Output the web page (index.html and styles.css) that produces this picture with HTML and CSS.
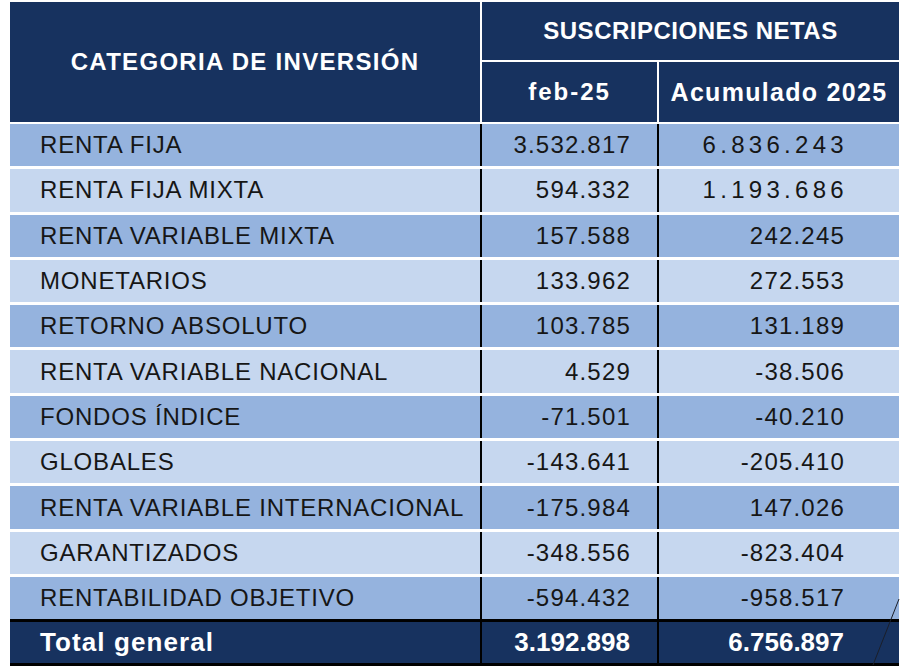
FILE: index.html
```html
<!DOCTYPE html>
<html lang="es">
<head>
<meta charset="utf-8">
<title>Suscripciones netas</title>
<link rel="stylesheet" href="styles.css">
</head>
<body>
<div class="wrap">
<table class="tbl">
  <colgroup>
    <col class="c1">
    <col class="c2">
    <col class="c3">
  </colgroup>
  <thead>
    <tr class="h1">
      <th rowspan="2" class="cat">CATEGORIA DE INVERSIÓN</th>
      <th colspan="2" class="sus">SUSCRIPCIONES NETAS</th>
    </tr>
    <tr class="h2">
      <th class="sub sub-a">feb-25</th>
      <th class="sub sub-b">Acumulado 2025</th>
    </tr>
  </thead>
  <tbody>
    <tr class="dark"><td class="name">RENTA FIJA</td><td class="n1">3.532.817</td><td class="n2 wide">6.836.243</td></tr>
    <tr class="light"><td class="name">RENTA FIJA MIXTA</td><td class="n1">594.332</td><td class="n2 wide">1.193.686</td></tr>
    <tr class="dark"><td class="name">RENTA VARIABLE MIXTA</td><td class="n1">157.588</td><td class="n2">242.245</td></tr>
    <tr class="light"><td class="name">MONETARIOS</td><td class="n1">133.962</td><td class="n2">272.553</td></tr>
    <tr class="dark"><td class="name">RETORNO ABSOLUTO</td><td class="n1">103.785</td><td class="n2">131.189</td></tr>
    <tr class="light"><td class="name">RENTA VARIABLE NACIONAL</td><td class="n1">4.529</td><td class="n2">-38.506</td></tr>
    <tr class="dark"><td class="name">FONDOS ÍNDICE</td><td class="n1">-71.501</td><td class="n2">-40.210</td></tr>
    <tr class="light"><td class="name">GLOBALES</td><td class="n1">-143.641</td><td class="n2">-205.410</td></tr>
    <tr class="dark"><td class="name">RENTA VARIABLE INTERNACIONAL</td><td class="n1">-175.984</td><td class="n2">147.026</td></tr>
    <tr class="light"><td class="name">GARANTIZADOS</td><td class="n1">-348.556</td><td class="n2">-823.404</td></tr>
    <tr class="dark"><td class="name">RENTABILIDAD OBJETIVO</td><td class="n1">-594.432</td><td class="n2">-958.517</td></tr>
  </tbody>
  <tfoot>
    <tr class="total"><td class="name">Total general</td><td class="n1">3.192.898</td><td class="n2">6.756.897</td></tr>
  </tfoot>
</table>
<svg class="slash" width="30" height="70" viewBox="0 0 30 70"><line x1="27" y1="0" x2="1" y2="66" stroke="#1b1f2a" stroke-width="1"/></svg>
</div>
</body>
</html>
```
FILE: styles.css
```css
html, body {
  margin: 0;
  padding: 0;
  background: #ffffff;
}
body {
  font-family: "Liberation Sans", Arial, sans-serif;
}
.wrap {
  position: relative;
  width: 906px;
  height: 672px;
}
.tbl {
  margin: 2px 0 0 10px;
  width: 889px;
  border-collapse: collapse;
  table-layout: fixed;
}
.c1 { width: 471px; }
.c2 { width: 177px; }
.c3 { width: 241px; }

th {
  background: #17325f;
  color: #ffffff;
  font-weight: bold;
  padding: 0;
  text-align: center;
  vertical-align: middle;
}
.cat {
  height: 120px;
  font-size: 24px;
  letter-spacing: 1.3px;
  border-right: 2px solid #ffffff;
  border-bottom: 2px solid #ffffff;
}
.h1 th.sus {
  height: 58px;
  font-size: 24px;
  letter-spacing: 0.5px;
  border-bottom: 2px solid #ffffff;
}
.h2 th {
  height: 60px;
  border-bottom: 2px solid #ffffff;
}
.sub-a {
  font-size: 24px;
  letter-spacing: 2px;
  border-right: 2px solid #ffffff;
}
.sub-b {
  font-size: 25px;
  letter-spacing: 1.3px;
}

td {
  padding: 0;
  height: 42.3px;
  font-size: 24px;
  color: #161616;
  vertical-align: middle;
  border-bottom: 3px solid #ffffff;
}
td.name {
  padding-left: 30px;
  text-align: left;
  letter-spacing: 0.8px;
}
td.n1 {
  text-align: right;
  padding-right: 26px;
  letter-spacing: 1.2px;
  border-left: 2px solid #000000;
}
td.n2 {
  text-align: right;
  padding-right: 54px;
  letter-spacing: 1.2px;
  border-left: 2px solid #000000;
}
td.n2.wide {
  letter-spacing: 4.3px;
  padding-right: 51px;
}
tr.dark td { background: #95b3de; }
tr.light td { background: #c6d7ef; }

tbody tr:last-child td {
  border-bottom: none;
  height: 42px;
}
tr.total td {
  background: #17325f;
  color: #ffffff;
  font-weight: bold;
  font-size: 26px;
  letter-spacing: 0;
  height: 41px;
  border-top: 3px solid #000000;
  border-bottom: 3px solid #000000;
}
tr.total td.name {
  letter-spacing: 1.1px;
}
tr.total td.n1 {
  padding-right: 27px;
}
tr.total td.n2 {
  padding-right: 55px;
}

.slash {
  position: absolute;
  left: 872px;
  top: 597px;
}
```
